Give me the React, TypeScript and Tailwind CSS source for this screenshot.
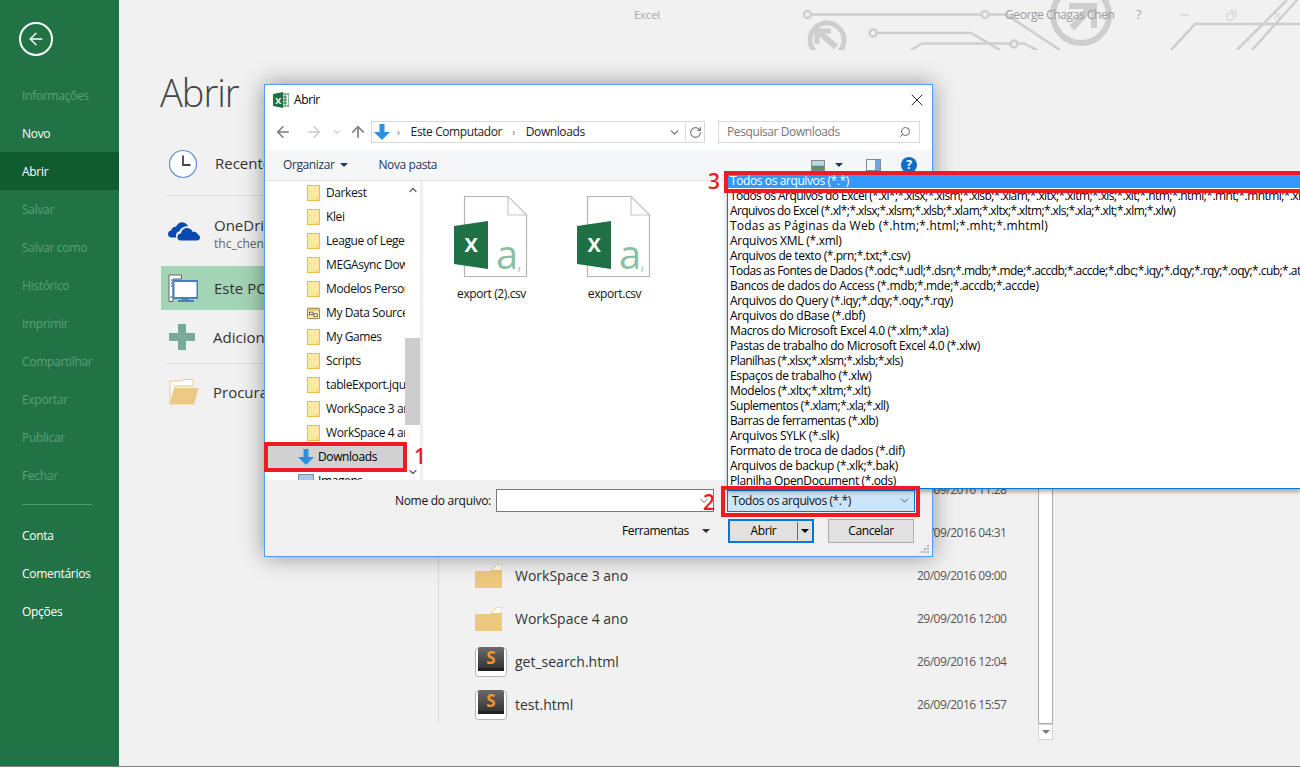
import React from 'react'
import { ArrowLeft, ArrowRight, ArrowUp, ChevronDown, ChevronUp, RotateCw, Search, X, Minus, Copy } from 'lucide-react'

const disabled = 'text-[#5b9f78]'
const sidebarTop = [
  { label: 'Informações', off: true },
  { label: 'Novo' },
  { label: 'Abrir', active: true },
  { label: 'Salvar', off: true },
  { label: 'Salvar como', off: true },
  { label: 'Histórico', off: true },
  { label: 'Imprimir', off: true },
  { label: 'Compartilhar', off: true },
  { label: 'Exportar', off: true },
  { label: 'Publicar', off: true },
  { label: 'Fechar', off: true },
]

const treeItems = ['Darkest', 'Klei', 'League of Legends', 'MEGAsync Downloads', 'Modelos Personalizados', 'My Data Sources', 'My Games', 'Scripts', 'tableExport.jquery', 'WorkSpace 3 ano', 'WorkSpace 4 ano']

const fileTypes = [
  { t: 'Todos os arquivos (*.*)', c: 'tracking-[-0.4px]' },
  { t: 'Todos os Arquivos do Excel (*.xl*;*.xlsx;*.xlsm;*.xlsb;*.xlam;*.xltx;*.xltm;*.xls;*.xlt;*.htm;*.html;*.mht;*.mhtml;*.xml;*.xla;*.xlm;*.xlw)', c: 'tracking-[-0.58px]' },
  { t: 'Arquivos do Excel (*.xl*;*.xlsx;*.xlsm;*.xlsb;*.xlam;*.xltx;*.xltm;*.xls;*.xla;*.xlt;*.xlm;*.xlw)', c: 'tracking-[-0.58px]' },
  { t: 'Todas as Páginas da Web (*.htm;*.html;*.mht;*.mhtml)', c: 'tracking-[0.2px]' },
  { t: 'Arquivos XML (*.xml)', c: 'tracking-[-0.25px]' },
  { t: 'Arquivos de texto (*.prn;*.txt;*.csv)', c: 'tracking-[-0.43px]' },
  { t: 'Todas as Fontes de Dados (*.odc;*.udl;*.dsn;*.mdb;*.mde;*.accdb;*.accde;*.dbc;*.iqy;*.dqy;*.rqy;*.oqy;*.cub;*.atom)', c: 'tracking-[-0.55px]' },
  { t: 'Bancos de dados do Access (*.mdb;*.mde;*.accdb;*.accde)', c: 'tracking-[-0.35px]' },
  { t: 'Arquivos do Query (*.iqy;*.dqy;*.oqy;*.rqy)', c: 'tracking-[-0.37px]' },
  { t: 'Arquivos do dBase (*.dbf)', c: 'tracking-[-0.3px]' },
  { t: 'Macros do Microsoft Excel 4.0 (*.xlm;*.xla)', c: 'tracking-[-0.4px]' },
  { t: 'Pastas de trabalho do Microsoft Excel 4.0 (*.xlw)', c: 'tracking-[-0.37px]' },
  { t: 'Planilhas (*.xlsx;*.xlsm;*.xlsb;*.xls)', c: 'tracking-[-0.55px]' },
  { t: 'Espaços de trabalho (*.xlw)', c: 'tracking-[-0.37px]' },
  { t: 'Modelos (*.xltx;*.xltm;*.xlt)', c: 'tracking-[-0.4px]' },
  { t: 'Suplementos (*.xlam;*.xla;*.xll)', c: 'tracking-[-0.5px]' },
  { t: 'Barras de ferramentas (*.xlb)', c: 'tracking-[-0.5px]' },
  { t: 'Arquivos SYLK (*.slk)', c: 'tracking-[-0.25px]' },
  { t: 'Formato de troca de dados (*.dif)', c: 'tracking-[-0.33px]' },
  { t: 'Arquivos de backup (*.xlk;*.bak)', c: 'tracking-[-0.35px]' },
  { t: 'Planilha OpenDocument (*.ods)', c: 'tracking-[-0.38px]' },
]

const recentRows = [
  { name: 'tableExport.jquery', date: '18/09/2016 11:28', kind: 'folder' },
  { name: 'Scripts', date: '09/09/2016 04:31', kind: 'folder' },
  { name: 'WorkSpace 3 ano', date: '20/09/2016 09:00', kind: 'folder' },
  { name: 'WorkSpace 4 ano', date: '29/09/2016 12:00', kind: 'folder' },
  { name: 'get_search.html', date: '26/09/2016 12:04', kind: 'sublime' },
  { name: 'test.html', date: '26/09/2016 15:57', kind: 'sublime' },
]

function Circuit() {
  return (
    <svg className="absolute left-[681px] top-0" width="500" height="50" viewBox="800 0 500 50" fill="none" stroke="#cecece" strokeWidth="2.5">
      <path d="M811 14.5H981M989 14.5H1006L1060 50" />
      <circle cx="807.5" cy="14.5" r="3.5" />
      <circle cx="985" cy="14.5" r="3.5" />
      <circle cx="827" cy="40" r="17" strokeWidth="5" />
      <path d="M820 33L836 47" strokeWidth="6" />
      <path d="M817 44V31H831" strokeWidth="5" />
      <path d="M877 33H971L1000 50" />
      <circle cx="873" cy="33" r="3.5" />
      <path d="M911 50L922 43.5H1010M1018 43.5H1024L1037 50" />
      <circle cx="1014" cy="44" r="3.5" />
      <circle cx="1081" cy="15" r="28" strokeWidth="6" />
      <path d="M1072 28L1090 8" strokeWidth="7" />
      <path d="M1069 6H1094V28" strokeWidth="6" />
      <path d="M1171 50L1195 24H1300" />
      <path d="M1237 50L1287 0M1252 50L1297 0" />
    </svg>
  )
}

function Clock() {
  return (
    <svg width="30" height="30" viewBox="0 0 30 30" fill="none">
      <circle cx="15" cy="15" r="13.5" fill="#fff" stroke="#5b93cf" strokeWidth="1.2" />
      <path d="M15 6.5V16H22.5" stroke="#444" strokeWidth="1.8" />
    </svg>
  )
}

function OneDrive() {
  return (
    <svg width="32" height="20" viewBox="0 0 32 20" fill="#094ab2">
      <path d="M8 16.5H3.5C1.5 16.5 0 15 0 13C0 11 1.5 9.5 3.2 9.4C3.8 6.8 6 5.5 8 5.8C9.5 2 13.5 0 17 2C18.5 2.8 19.5 4 20 5.3C15.5 5 12.5 7.5 11.5 10.3C9.3 10.4 8 12.5 8 14.5Z" />
      <path d="M12.5 19.5C10.5 19.5 9.3 18 9.3 16.2C9.3 14 11 12.5 13 12.5C13.5 9 16.5 6.8 19.5 7C22 7.2 24 8.8 24.8 11C27 10.5 29 11.5 29.8 13.5C31.2 14 32 15.3 32 16.8C32 18.3 30.7 19.5 29 19.5Z" />
    </svg>
  )
}

function ThisPc() {
  return (
    <svg width="30" height="29" viewBox="0 0 30 29" fill="none">
      <path d="M1 1H13.5V5H5V27.5H1Z" fill="#fff" stroke="#666" strokeWidth="1" />
      <path d="M3 6H4M3 9H4M3 12H4M2.5 23H4" stroke="#777" strokeWidth="1.5" />
      <path d="M6 5H13M6 8H7" stroke="#999" />
      <rect x="5.5" y="7" width="24" height="17" fill="#fff" stroke="#4a7fbd" strokeWidth="2" />
      <path d="M14 24H21V26H26V28H10V26H14Z" fill="#4a7fbd" />
    </svg>
  )
}

function Plus() {
  return (
    <svg width="26" height="26" viewBox="0 0 26 26" fill="#79a998">
      <path d="M9 0H17V9H26V17H17V26H9V17H0V9H9Z" />
    </svg>
  )
}

function OpenFolder() {
  return (
    <svg width="30" height="26" viewBox="0 0 30 26">
      <path d="M1 25V2H12L15 0.5H24V7H6Z" fill="#fff" stroke="#edc987" />
      <path d="M0.5 25.5L6 9H29.5L25 25.5Z" fill="#edc987" />
    </svg>
  )
}

function BackFolder() {
  return (
    <svg width="27" height="24" viewBox="0 0 27 24">
      <path d="M0 7H15L21 0.5H27V24H0Z" fill="#edc97f" />
      <path d="M17 6L21.5 1H26.5V6Z" fill="#fff" />
    </svg>
  )
}

function Sublime() {
  return (
    <svg width="32" height="30" viewBox="0 0 32 30">
      <defs>
        <linearGradient id="subl" x1="0" y1="0" x2="0" y2="1">
          <stop offset="0" stopColor="#6a6a6a" />
          <stop offset="1" stopColor="#2f2f2f" />
        </linearGradient>
      </defs>
      <rect x="0.5" y="1" width="31" height="28.5" rx="3" fill="#fff" stroke="#b5b5b5" />
      <rect x="3" y="0" width="26" height="24" rx="2" fill="url(#subl)" />
      <rect x="3" y="21" width="26" height="3" fill="#222" />
      <text x="16" y="17" textAnchor="middle" fontFamily="Open Sans" fontWeight="700" fontSize="17" fill="#f9932e">S</text>
    </svg>
  )
}

function NavFolder() {
  return (
    <svg width="13" height="16" viewBox="0 0 13 16">
      <rect x="0.5" y="0.5" width="12" height="15" fill="#fde9a4" stroke="#e8bd48" />
      <path d="M10 12.5V15.5" stroke="#e8bd48" />
    </svg>
  )
}

function DataFolder() {
  return (
    <svg width="15" height="14" viewBox="0 0 15 14">
      <rect x="0.5" y="1.5" width="14" height="12" rx="1" fill="#fde9a4" stroke="#7b6a2c" />
      <path d="M0.5 3.5H14.5" stroke="#c9a640" />
      <rect x="3" y="6" width="4" height="3" fill="#fff" stroke="#333" strokeWidth="0.8" />
      <rect x="8" y="8" width="4" height="3" fill="#fff" stroke="#333" strokeWidth="0.8" />
    </svg>
  )
}

function DownArrow({ size = 16 }: { size?: number }) {
  return (
    <svg width={size} height={size} viewBox="0 0 16 16" fill="#2e8fe0">
      <path d="M5.5 0H10.5V8H16L8 16L0 8H5.5Z" />
    </svg>
  )
}

function ExcelSmall() {
  return (
    <svg width="16" height="16" viewBox="0 0 16 16">
      <rect x="8" y="2" width="8" height="12" fill="#fff" stroke="#1f7145" />
      <path d="M10 5H14M10 8H14M10 11H14M12 3V13" stroke="#1f7145" />
      <path d="M0 2L10 0V16L0 14Z" fill="#1f7145" />
      <text x="5" y="11.5" textAnchor="middle" fontFamily="Open Sans" fontWeight="700" fontSize="9" fill="#fff">X</text>
    </svg>
  )
}

function CsvIcon() {
  return (
    <svg width="76" height="86" viewBox="0 0 76 86">
      <path d="M10.5 1.5H54L72.5 20V81.5H10.5Z" fill="#fff" stroke="#b5b5b5" strokeWidth="1.2" />
      <path d="M54 1.5V20H72.5Z" fill="#fff" stroke="#c8c8c8" strokeWidth="1.2" />
      <path d="M0 31L34 26V74L0 69Z" fill="#1f7145" />
      <text x="17" y="57" textAnchor="middle" fontFamily="Open Sans" fontWeight="700" fontSize="20" fill="#fff">X</text>
      <text x="42" y="74" fontFamily="Open Sans" fontWeight="400" fontSize="40" letterSpacing="-1" fill="#8abfa2">a<tspan fontSize="20" fontWeight="300">,</tspan></text>
    </svg>
  )
}

function MenuCaret({ className = '' }: { className?: string }) {
  return <span className={`inline-block w-0 h-0 border-l-[4px] border-r-[4px] border-t-[4px] border-l-transparent border-r-transparent ${className}`} />
}

function Dialog() {
  return (
    <div className="absolute left-[264px] top-[84px] w-[669px] h-[473px] bg-white border border-[#4a9ff0] shadow-[0_0_22px_rgba(0,0,0,0.4)] flex flex-col text-[12px] tracking-[-0.4px] text-black">
      <div className="h-[30px] flex items-center pl-[8px] pr-[5px]">
        <ExcelSmall />
        <span className="ml-[5px]">Abrir</span>
        <X size={20} strokeWidth={1} className="ml-auto" />
      </div>
      <div className="h-[35px] flex items-start pt-[6px] pl-[9px]">
        <div className="w-[97px] h-[21px] flex items-center text-[#7a7a7a] shrink-0">
          <ArrowLeft size={18} strokeWidth={2} />
          <ArrowRight size={18} strokeWidth={2} className="ml-[13px] text-[#c9c9c9]" />
          <ChevronDown size={10} strokeWidth={2} className="ml-[9px] text-[#9a9a9a]" />
          <ArrowUp size={18} strokeWidth={2.2} className="ml-[7px]" />
        </div>
        <div className="w-[334px] h-[22px] border border-[#d9d9d9] flex items-center pl-[2px] text-[#222]">
          <DownArrow />
          <span className="ml-[7px] text-[#777] text-[10px]">›</span>
          <span className="ml-[11px]">Este Computador</span>
          <span className="ml-[10px] text-[#777] text-[10px]">›</span>
          <span className="ml-[11px]">Downloads</span>
          <ChevronDown size={13} strokeWidth={2} className="ml-auto mr-[4px] text-[#666]" />
          <div className="w-[19px] h-full border-l border-[#d9d9d9] flex items-center justify-center">
            <RotateCw size={13} className="text-[#777]" />
          </div>
        </div>
        <div className="ml-[13px] w-[202px] h-[22px] border border-[#d9d9d9] flex items-center px-[8px] text-[#777]">
          <span>Pesquisar Downloads</span>
          <Search size={12} strokeWidth={2} className="ml-auto -scale-x-100 text-[#666]" />
        </div>
      </div>
      <div className="h-[31px] bg-[#f5f6f7] border-b border-[#e5e5e5] flex items-center pl-[18px] pr-[15px] text-[#1e395b]">
        <span>Organizar</span>
        <MenuCaret className="ml-[6px] border-t-[#1e395b]" />
        <span className="ml-[30px]">Nova pasta</span>
        <div className="ml-auto w-[14px] h-[11px] border border-[#8a8a8a] bg-[linear-gradient(#bcd4ea_45%,#5c8f6c_60%)]" />
        <MenuCaret className="ml-[10px] border-t-[#1e395b]" />
        <div className="ml-[23px] w-[15px] h-[12px] border border-[#7d8a99] flex justify-end">
          <div className="w-[5px] bg-[#6aa5dc]" />
        </div>
        <div className="ml-[20px] w-[16px] h-[16px] rounded-full bg-[#0f6fc6] text-white font-bold text-[12px] leading-[16px] text-center">?</div>
      </div>
      <div className="h-[299px] flex overflow-hidden">
        <div className="w-[140px] overflow-hidden shrink-0">
          {treeItems.map((name) => (
            <div key={name} className="h-[24px] flex items-center pl-[42px] whitespace-nowrap overflow-hidden">
              <span className="w-[13px] shrink-0 flex justify-end">{name === 'My Data Sources' ? <DataFolder /> : <NavFolder />}</span>
              <span className="ml-[6px] text-[#111]">{name}</span>
            </div>
          ))}
          <div className="h-[24px] bg-[#d1d1d1] flex items-center pl-[33px]">
            <DownArrow />
            <span className="ml-[4px]">Downloads</span>
          </div>
          <div className="h-[24px] flex items-center pl-[33px]">
            <div className="w-[16px] h-[14px] border border-[#8a8a8a] bg-[#a9c8ee]" />
            <span className="ml-[4px]">Imagens</span>
          </div>
        </div>
        <div className="w-[15px] shrink-0 flex flex-col items-center text-[#606060]">
          <ChevronUp size={12} strokeWidth={2.5} className="mt-[3px]" />
          <div className="w-full h-[87px] mt-[142px] bg-[#cdcdcd]" />
          <ChevronDown size={12} strokeWidth={2.5} className="mt-[41px]" />
        </div>
        <div className="w-[3px] bg-[#f0f0f0] shrink-0" />
        <div className="flex-1 flex pl-[7px] pt-[14px]">
          {['export (2).csv', 'export.csv'].map((name) => (
            <div key={name} className="w-[123px] flex flex-col items-center text-[#111]">
              <CsvIcon />
              <span className="mt-[4px]">{name}</span>
            </div>
          ))}
        </div>
      </div>
      <div className="flex-1 bg-[#f0f0f0] flex flex-col relative">
        <div className="h-[23px] mt-[9px] flex items-center">
          <span className="w-[226px] text-right text-[#111] tracking-[-0.28px]">Nome do arquivo:</span>
          <div className="ml-[5px] w-[218px] h-[23px] bg-white border border-[#7a7a7a] flex items-center justify-end pr-[3px]">
            <ChevronDown size={12} className="text-[#666]" />
          </div>
          <div className="ml-[13px] w-[188px] h-[22px] bg-[#cce4f7] border border-[#0078d7] flex items-center pl-[4px] text-[#111]">
            <span>Todos os arquivos (*.*)</span>
            <ChevronDown size={13} strokeWidth={1.5} className="ml-auto mr-[3px] text-[#333]" />
          </div>
        </div>
        <div className="h-[24px] mt-[7px] flex items-center">
          <span className="ml-[357px] w-[75px]">Ferramentas</span>
          <MenuCaret className="ml-[5px] border-t-[#333]" />
          <div className="ml-[18px] w-[86px] h-[24px] bg-[#e1e1e1] border-2 border-[#0078d7] flex items-center">
            <span className="flex-1 text-center">Abrir</span>
            <div className="w-px h-[18px] bg-[#666]" />
            <MenuCaret className="mx-[3px] border-t-black" />
          </div>
          <div className="ml-[14px] w-[86px] h-[24px] bg-[#e1e1e1] border border-[#adadad] flex items-center justify-center">Cancelar</div>
        </div>
        <svg className="absolute right-[2px] bottom-[2px]" width="10" height="10" viewBox="0 0 10 10" fill="#b5b5b5">
          <rect x="7" y="1" width="2" height="2" /><rect x="4" y="4" width="2" height="2" /><rect x="7" y="4" width="2" height="2" />
          <rect x="1" y="7" width="2" height="2" /><rect x="4" y="7" width="2" height="2" /><rect x="7" y="7" width="2" height="2" />
        </svg>
      </div>
    </div>
  )
}

function TypeList() {
  return (
    <div className="absolute left-[727px] top-[173px] w-[573px] h-[316px] bg-white border-l border-b border-[#0078d7] text-[12px] text-black overflow-hidden shadow-[0_3px_4px_rgba(0,0,0,0.3)]">
      {fileTypes.map((row, i) => (
        <div key={row.t} className={`h-[15px] leading-[15px] pl-[2px] whitespace-nowrap ${row.c} ${i === 0 ? 'bg-[#3399ff] text-white' : ''}`}>{row.t}</div>
      ))}
    </div>
  )
}

export default function App() {
  return (
    <div className="relative w-[1300px] h-[767px] overflow-hidden bg-[#f1f1f1] border-b border-[#7f7f7f] flex font-['Open_Sans',sans-serif]">
      <aside className="w-[119px] shrink-0 bg-[#217346] text-white text-[12px] tracking-[-0.3px] flex flex-col">
        <div className="h-[76px] pl-[19px] pt-[22px]">
          <div className="w-[34px] h-[34px] rounded-full border-2 border-white flex items-center justify-center">
            <ArrowLeft size={20} strokeWidth={1.6} />
          </div>
        </div>
        {sidebarTop.map((it) => (
          <div key={it.label} className={`h-[38px] flex items-center pl-[22px] pt-[2px] ${it.off ? disabled : ''} ${it.active ? 'bg-[#105c2e]' : ''}`}>{it.label}</div>
        ))}
        <div className="h-px bg-[#4e9a6e] mx-[22px] mt-[10px] mb-[11px] w-[70px]" />
        {['Conta', 'Comentários', 'Opções'].map((l) => (
          <div key={l} className="h-[38px] flex items-center pl-[22px] pt-[2px]">{l}</div>
        ))}
      </aside>

      <main className="relative flex-1 flex flex-col text-[#444]">
        <Circuit />
        <div className="h-[30px] relative flex items-center text-[11px] text-[#a6a6a6] pl-[515px] whitespace-nowrap">
          <span className="w-[26px] shrink-0">Excel</span>
          <span className="ml-[345px] w-[111px] shrink-0 text-[12px] tracking-[-0.4px] text-[#9a9a9a]">George Chagas Chen</span>
          <span className="ml-[20px] w-[7px] shrink-0 text-[13px]">?</span>
          <Minus size={12} strokeWidth={1} className="ml-[36px] shrink-0" />
          <Copy size={11} strokeWidth={1} className="ml-[35px] shrink-0 -scale-x-100" />
          <X size={13} strokeWidth={1} className="ml-[34px] shrink-0" />
        </div>
        <div className="flex flex-1">
          <div className="w-[319px] shrink-0 pl-[42px]">
            <h1 className="h-[104px] pt-[33px] -ml-px text-[38px] font-light tracking-[-1px] leading-[58px]">Abrir</h1>
            <div className="h-[63px] flex items-center pl-[7px] -mt-[2px] text-[#333]">
              <Clock />
              <span className="ml-[17px] text-[15px]">Recente</span>
            </div>
            <div className="h-px bg-[#dcdcdc] ml-[6px]" />
            <div className="h-[70px] flex items-center pl-[7px] text-[#333]">
              <OneDrive />
              <div className="ml-[14px] flex flex-col mt-[6px]">
                <span className="text-[15px] leading-[19px]">OneDrive</span>
                <span className="text-[12px] leading-[17px] text-[#666]">thc_chen</span>
              </div>
            </div>
            <div className="h-[44px] bg-[#a3d4b6] flex items-center pl-[7px] text-[#333]">
              <ThisPc />
              <span className="ml-[16px] text-[15px]">Este PC</span>
            </div>
            <div className="h-[53px] flex items-center pl-[8px] pt-[1px] text-[#333]">
              <Plus />
              <span className="ml-[18px] text-[15px]">Adicionar um Local</span>
            </div>
            <div className="h-px bg-[#dcdcdc] ml-[6px]" />
            <div className="h-[56px] flex items-center pl-[8px] text-[#333]">
              <OpenFolder />
              <span className="ml-[14px] text-[15px]">Procurar</span>
            </div>
          </div>
          <div className="flex-1 flex flex-col justify-end pb-[42px]">
            <div className="flex items-end">
              <div className="w-[600px] border-l border-[#dcdcdc] shrink-0">
                {recentRows.map((r) => (
                  <div key={r.name} className="h-[43px] pt-[4px] flex items-center">
                    <div className="w-[76px] pl-[36px] flex justify-start shrink-0">
                      {r.kind === 'folder' ? <BackFolder /> : <Sublime />}
                    </div>
                    <span className="text-[14px] text-[#333] w-[402px]">{r.name}</span>
                    <span className="text-[12px] tracking-[-0.5px] text-[#555]">{r.date}</span>
                  </div>
                ))}
              </div>
              <div className="w-[15px] h-[300px] -mb-[16px] flex flex-col">
                <div className="flex-1 bg-white border border-[#ababab]" />
                <div className="h-[16px] bg-white border border-[#d5d5d5] flex items-center justify-center">
                  <MenuCaret className="border-t-[#777]" />
                </div>
              </div>
            </div>
          </div>
        </div>
      </main>

      <Dialog />
      <TypeList />

      <div className="absolute left-[264px] top-[442px] w-[143px] h-[30px] border-[4px] border-[#ed1c24]" />
      <div className="absolute left-[721px] top-[486px] w-[199px] h-[31px] border-[4px] border-[#ed1c24]" />
      <div className="absolute left-[724px] top-[171px] w-[576px] h-[22px] border-[4px] border-r-0 border-[#ed1c24]" />
      <span className="absolute left-[414px] top-[442px] text-[21px] leading-[28px] font-semibold text-[#ed1c24]">1</span>
      <span className="absolute left-[703px] top-[488px] text-[21px] leading-[28px] font-semibold text-[#ed1c24]">2</span>
      <span className="absolute left-[708px] top-[167px] text-[21px] leading-[28px] font-semibold text-[#ed1c24]">3</span>
    </div>
  )
}
